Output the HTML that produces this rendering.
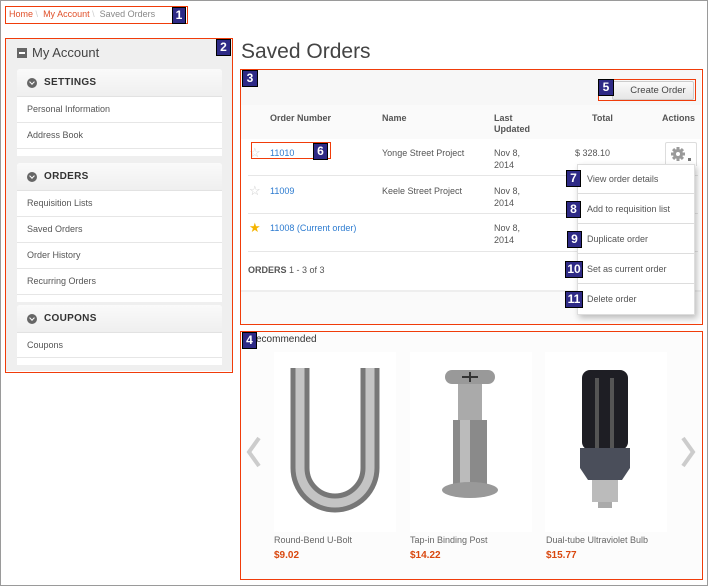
<!DOCTYPE html>
<html><head><meta charset="utf-8"><style>
*{box-sizing:border-box;margin:0;padding:0}
body{width:708px;height:586px;background:#fff;font-family:"Liberation Sans",Arial,sans-serif;position:relative;overflow:hidden;font-size:9px;color:#555}
.frame{position:absolute;left:0;top:0;width:708px;height:586px;border:1px solid #9a9a9a}
.abs{position:absolute}
.rb{position:absolute;border:1.5px solid #f03c0a}
.lab{position:absolute;background:#2e2a86;color:#fff;font-weight:bold;font-size:12px;text-align:center;line-height:15px;border:1px solid #000;height:17px}
.panel{position:absolute;left:17px;width:205px;background:#fff;border-radius:3px}
.ph{height:28px;background:linear-gradient(#fafafa,#efefef);border-bottom:1px solid #e2e2e2;font-weight:bold;font-size:10px;color:#333;padding-left:27px;line-height:28px;position:relative;letter-spacing:.3px;border-radius:3px 3px 0 0}
.ph:before{content:"";position:absolute;left:10px;top:9px;width:10px;height:10px;border-radius:50%;background:#666}
.ph:after{content:"";position:absolute;left:13px;top:11px;width:3px;height:3px;border-right:1.5px solid #fff;border-bottom:1.5px solid #fff;transform:rotate(45deg)}
.it{height:26px;border-bottom:1px solid #e6e6e6;line-height:25px;padding-left:10px;font-size:9px;color:#555}
.gap{height:7px;background:#fff}
.mi{position:absolute;left:577px;width:118px;height:30px;border-bottom:1px solid #ddd;font-size:9px;color:#555;padding-left:5px;line-height:30px}
a{color:#2c7bd0;text-decoration:none}
.pn{position:absolute;font-size:9px;color:#666}
.pp{position:absolute;font-size:10px;font-weight:bold;color:#d9480f}
</style></head><body>
<div class="frame"></div>

<div class="abs" style="left:9px;top:9px;font-size:9px;color:#888"><span style="color:#e0502a">Home</span> <span style="color:#ccc">\</span>&nbsp; <span style="color:#e0502a">My Account</span> <span style="color:#ccc">\</span>&nbsp; Saved Orders</div>
<div class="rb" style="left:5px;top:6px;width:183px;height:18px"></div>
<div class="lab" style="left:172px;top:7px;width:14px">1</div>

<div class="abs" style="left:6px;top:39px;width:226px;height:332px;background:#efefef"></div>
<div class="abs" style="left:17px;top:48px;width:10px;height:10px;background:#666"></div>
<div class="abs" style="left:19px;top:52px;width:6px;height:2px;background:#fff"></div>
<div class="abs" style="left:32px;top:45px;font-size:13px;color:#444">My Account</div>
<div class="panel" style="top:69px"><div class="ph">SETTINGS</div><div class="it">Personal Information</div><div class="it">Address Book</div><div class="gap"></div></div>
<div class="panel" style="top:163px"><div class="ph">ORDERS</div><div class="it">Requisition Lists</div><div class="it">Saved Orders</div><div class="it">Order History</div><div class="it">Recurring Orders</div><div class="gap"></div></div>
<div class="panel" style="top:305px"><div class="ph">COUPONS</div><div class="it" style="height:25px">Coupons</div><div class="gap"></div></div>
<div class="rb" style="left:5px;top:38px;width:228px;height:335px"></div>
<div class="lab" style="left:216px;top:39px;width:15px">2</div>

<div class="abs" style="left:241px;top:40px;font-size:21px;color:#444">Saved Orders</div>

<div class="abs" style="left:241px;top:70px;width:460px;height:35px;background:#f7f7f7"></div>
<div class="abs" style="left:241px;top:105px;width:460px;height:34px;background:#fafafa"></div>
<div class="abs" style="left:612px;top:81px;width:82px;height:19px;background:linear-gradient(#fafafa,#e6e6e6);border:1px solid #ccc;border-radius:2px;font-size:9.5px;color:#444;text-align:center;line-height:17px;padding-left:10px">Create Order</div>
<div class="rb" style="left:598px;top:79px;width:98px;height:22px"></div>
<div class="lab" style="left:598px;top:79px;width:16px">5</div>

<div class="abs" style="left:270px;top:113px;font-weight:bold;color:#555">Order Number</div>
<div class="abs" style="left:382px;top:113px;font-weight:bold;color:#555">Name</div>
<div class="abs" style="left:494px;top:113px;font-weight:bold;color:#555;line-height:11px">Last<br>Updated</div>
<div class="abs" style="left:592px;top:113px;font-weight:bold;color:#555">Total</div>
<div class="abs" style="left:662px;top:113px;font-weight:bold;color:#555">Actions</div>

<div class="abs" style="left:248px;top:175px;width:450px;height:1px;background:#e6e6e6"></div>
<div class="abs" style="left:248px;top:213px;width:450px;height:1px;background:#e6e6e6"></div>
<div class="abs" style="left:248px;top:251px;width:450px;height:1px;background:#e6e6e6"></div>
<div class="abs" style="left:241px;top:290px;width:460px;height:2px;background:#eee"></div>
<div class="abs" style="left:241px;top:292px;width:460px;height:32px;background:#fafafa"></div>

<div class="abs" style="left:249px;top:145px;font-size:13px;color:#ccc">☆</div>
<div class="abs" style="left:270px;top:148px"><a>11010</a></div>
<div class="abs" style="left:382px;top:148px">Yonge Street Project</div>
<div class="abs" style="left:494px;top:147px;line-height:12px">Nov 8,<br>2014</div>
<div class="abs" style="left:575px;top:148px">$ 328.10</div>
<div class="rb" style="left:251px;top:142px;width:80px;height:17px"></div>
<div class="lab" style="left:313px;top:143px;width:15px">6</div>

<div class="abs" style="left:249px;top:183px;font-size:13px;color:#ccc">☆</div>
<div class="abs" style="left:270px;top:186px"><a>11009</a></div>
<div class="abs" style="left:382px;top:186px">Keele Street Project</div>
<div class="abs" style="left:494px;top:185px;line-height:12px">Nov 8,<br>2014</div>

<div class="abs" style="left:249px;top:220px;font-size:13px;color:#f5b400">★</div>
<div class="abs" style="left:270px;top:223px"><a>11008 (Current order)</a></div>
<div class="abs" style="left:494px;top:222px;line-height:12px">Nov 8,<br>2014</div>

<div class="abs" style="left:248px;top:265px"><b>ORDERS</b> 1 - 3 of 3</div>

<div class="abs" style="left:665px;top:142px;width:32px;height:24px;background:#fff;border:1px solid #ddd;border-bottom:none;border-radius:2px 2px 0 0"></div>
<svg class="abs" style="left:670px;top:146px" width="16" height="16" viewBox="0 0 16 16"><g fill="#9a9a9a"><circle cx="8" cy="8" r="5"/><rect x="6.5" y="1" width="3" height="14"/><rect x="1" y="6.5" width="14" height="3"/><rect x="6.5" y="1" width="3" height="14" transform="rotate(45 8 8)"/><rect x="6.5" y="1" width="3" height="14" transform="rotate(-45 8 8)"/></g><circle cx="8" cy="8" r="2" fill="#fff"/></svg>
<div class="abs" style="left:688px;top:158px;width:3px;height:3px;background:#777"></div>

<div class="abs" style="left:577px;top:164px;width:118px;height:151px;background:#fff;border:1px solid #ddd;box-shadow:2px 3px 6px rgba(0,0,0,.25)"></div>
<div class="mi" style="top:164px">&nbsp;&nbsp;View order details</div>
<div class="mi" style="top:194px">&nbsp;&nbsp;Add to requisition list</div>
<div class="mi" style="top:224px">&nbsp;&nbsp;Duplicate order</div>
<div class="mi" style="top:254px">&nbsp;&nbsp;Set as current order</div>
<div class="mi" style="top:284px;border:none">&nbsp;&nbsp;Delete order</div>
<div class="lab" style="left:566px;top:170px;width:15px">7</div>
<div class="lab" style="left:566px;top:201px;width:15px">8</div>
<div class="lab" style="left:567px;top:231px;width:15px">9</div>
<div class="lab" style="left:565px;top:261px;width:18px">10</div>
<div class="lab" style="left:565px;top:291px;width:18px">11</div>

<div class="rb" style="left:240px;top:69px;width:463px;height:256px"></div>
<div class="lab" style="left:242px;top:70px;width:16px">3</div>

<div class="abs" style="left:241px;top:332px;width:460px;height:247px;background:#fcfcfc"></div>
<div class="abs" style="left:256px;top:334px;font-size:10px;color:#333">ecommended</div>
<div class="abs" style="left:274px;top:352px;width:122px;height:180px;background:#fff"></div>
<div class="abs" style="left:410px;top:352px;width:122px;height:180px;background:#fff"></div>
<div class="abs" style="left:545px;top:352px;width:122px;height:180px;background:#fff"></div>
<svg class="abs" style="left:246px;top:436px" width="16" height="32"><path d="M13 2 L3 16 L13 30" stroke="#ccc" stroke-width="4" fill="none"/></svg>
<svg class="abs" style="left:680px;top:436px" width="16" height="32"><path d="M3 2 L13 16 L3 30" stroke="#ccc" stroke-width="4" fill="none"/></svg>

<svg class="abs" style="left:280px;top:358px" width="110" height="170"><path d="M20 10 V110 A35 35 0 0 0 90 110 V10" stroke="#777" stroke-width="19" fill="none"/><path d="M20 10 V110 A35 35 0 0 0 90 110 V10" stroke="#c4c4c4" stroke-width="9" fill="none"/></svg>

<svg class="abs" style="left:420px;top:358px" width="100" height="150"><rect x="25" y="12" width="50" height="14" rx="7" fill="#999"/><path d="M50 14v10M42 19h16" stroke="#333" stroke-width="2"/><rect x="38" y="26" width="24" height="40" fill="#aaa"/><rect x="33" y="62" width="34" height="68" fill="#8a8a8a"/><rect x="40" y="62" width="10" height="68" fill="#bbb"/><ellipse cx="50" cy="132" rx="28" ry="8" fill="#999"/></svg>

<svg class="abs" style="left:570px;top:368px" width="70" height="150"><rect x="12" y="2" width="46" height="80" rx="8" fill="#1e1e24"/><rect x="25" y="10" width="4" height="70" fill="#555"/><rect x="40" y="10" width="4" height="70" fill="#555"/><path d="M10 80h50v20l-8 12H18l-8-12z" fill="#4a4e5a"/><rect x="22" y="112" width="26" height="22" fill="#bbb"/><rect x="28" y="134" width="14" height="6" fill="#aaa"/></svg>

<div class="pn" style="left:274px;top:535px">Round-Bend U-Bolt</div>
<div class="pn" style="left:410px;top:535px">Tap-in Binding Post</div>
<div class="pn" style="left:546px;top:535px">Dual-tube Ultraviolet Bulb</div>
<div class="pp" style="left:274px;top:550px">$9.02</div>
<div class="pp" style="left:410px;top:550px">$14.22</div>
<div class="pp" style="left:546px;top:550px">$15.77</div>

<div class="rb" style="left:240px;top:331px;width:463px;height:249px"></div>
<div class="lab" style="left:242px;top:332px;width:15px">4</div>
</body></html>
